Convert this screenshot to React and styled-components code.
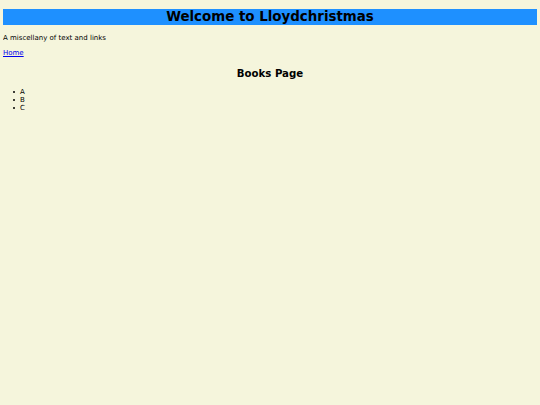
import React from "react";
import styled, { createGlobalStyle } from "styled-components";

const GlobalStyle = createGlobalStyle`
  html, body {
    background-color: #f5f5dc;
  }
  body {
    margin: 3px;
    font-family: "DejaVu Sans", Verdana, sans-serif;
    font-size: 7px;
    color: #000;
  }
`;

const Banner = styled.h1`
  background-color: #1e90ff;
  text-align: center;
  font-size: 13.4px;
  font-weight: bold;
  line-height: 16px;
  margin: 6px 0 0;
`;

const Tagline = styled.p`
  margin: 9px 0 0;
  line-height: 9px;
`;

const Nav = styled.p`
  margin: 6px 0 0;
  line-height: 9px;

  a {
    color: #0000ee;
  }
`;

const PageTitle = styled.h2`
  text-align: center;
  font-size: 10.2px;
  font-weight: bold;
  line-height: 13px;
  margin: 9px 0 0;
`;

const BookList = styled.ul`
  list-style: none;
  margin: 8px 0 0;
  padding-left: 10px;
  line-height: 8px;
`;

const BookItem = styled.li`
  display: flex;
  align-items: center;
  gap: 5px;

  &::before {
    content: "";
    width: 2px;
    height: 2px;
    border-radius: 50%;
    background: #000;
  }
`;

const books = ["A", "B", "C"];

export default function App() {
  return (
    <>
      <GlobalStyle />
      <Banner>Welcome to Lloydchristmas</Banner>
      <Tagline>A miscellany of text and links</Tagline>
      <Nav>
        <a href="#">Home</a>
      </Nav>
      <PageTitle>Books Page</PageTitle>
      <BookList>
        {books.map((b) => (
          <BookItem key={b}>{b}</BookItem>
        ))}
      </BookList>
    </>
  );
}
